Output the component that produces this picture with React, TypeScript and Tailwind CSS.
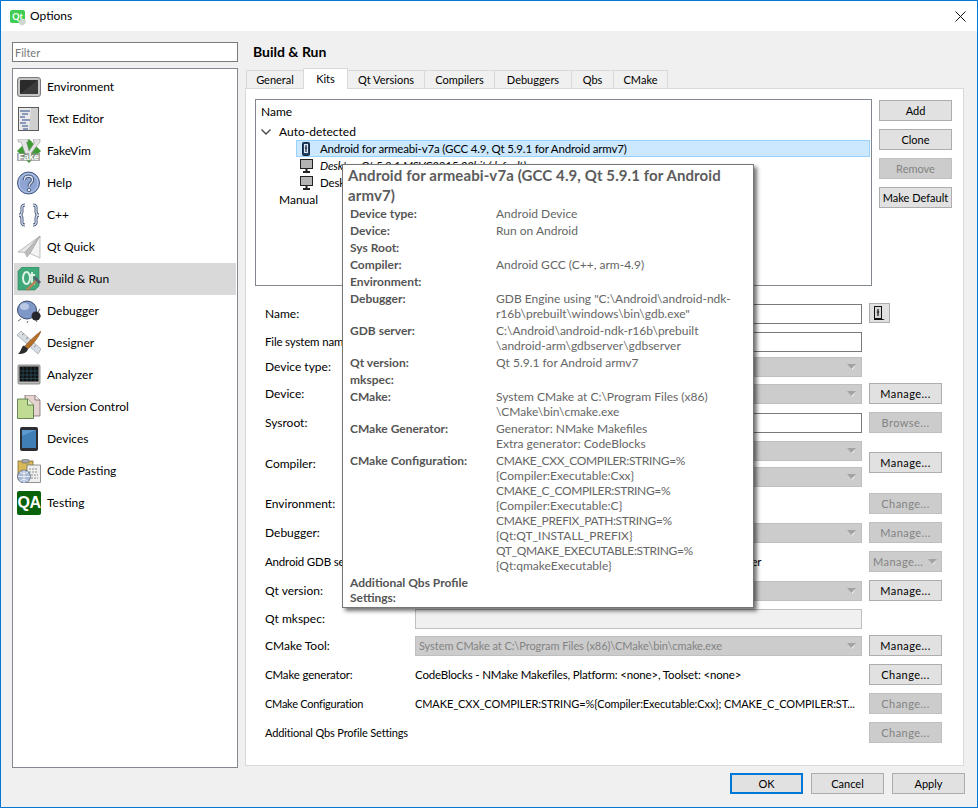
import React from "react";

const tight = "text-[11.5px] tracking-[-0.17px]";
const tighter = "text-[11px] tracking-[-0.15px]";

const sideItems = [
  { name: "Environment", icon: <EnvIcon /> },
  { name: "Text Editor", icon: <EditorIcon /> },
  { name: "FakeVim", icon: <VimIcon /> },
  { name: "Help", icon: <HelpIcon /> },
  { name: "C++", icon: <BracesIcon /> },
  { name: "Qt Quick", icon: <PlaneIcon /> },
  { name: "Build & Run", icon: <BuildIcon />, active: true },
  { name: "Debugger", icon: <BugIcon /> },
  { name: "Designer", icon: <DesignerIcon /> },
  { name: "Analyzer", icon: <AnalyzerIcon /> },
  { name: "Version Control", icon: <VersionIcon /> },
  { name: "Devices", icon: <DeviceIcon /> },
  { name: "Code Pasting", icon: <PasteIcon /> },
  { name: "Testing", icon: <QaIcon /> },
];

const tabs = [
  { name: "General", width: "w-[58px]" },
  { name: "Kits", width: "w-[45px]", active: true },
  { name: "Qt Versions", width: "w-[78px]" },
  { name: "Compilers", width: "w-[71px]" },
  { name: "Debuggers", width: "w-[78px]" },
  { name: "Qbs", width: "w-[43px]" },
  { name: "CMake", width: "w-[55px]" },
];

const tipRows = [
  ["Device type:", ["Android Device"]],
  ["Device:", ["Run on Android"]],
  ["Sys Root:", []],
  ["Compiler:", ["Android GCC (C++, arm-4.9)"]],
  ["Environment:", []],
  ["Debugger:", ['GDB Engine using "C:\\Android\\android-ndk-', "r16b\\prebuilt\\windows\\bin\\gdb.exe\""]],
  ["GDB server:", ["C:\\Android\\android-ndk-r16b\\prebuilt", "\\android-arm\\gdbserver\\gdbserver"]],
  ["Qt version:", ["Qt 5.9.1 for Android armv7"]],
  ["mkspec:", []],
  ["CMake:", ["System CMake at C:\\Program Files (x86)", "\\CMake\\bin\\cmake.exe"]],
  ["CMake Generator:", ["Generator: NMake Makefiles", "Extra generator: CodeBlocks"]],
  [
    "CMake Configuration:",
    [
      "CMAKE_CXX_COMPILER:STRING=%",
      "{Compiler:Executable:Cxx}",
      "CMAKE_C_COMPILER:STRING=%",
      "{Compiler:Executable:C}",
      "CMAKE_PREFIX_PATH:STRING=%",
      "{Qt:QT_INSTALL_PREFIX}",
      "QT_QMAKE_EXECUTABLE:STRING=%",
      "{Qt:qmakeExecutable}",
    ],
  ],
] as [string, string[]][];

function EnvIcon() {
  return (
    <svg width="24" height="24" viewBox="0 0 24 24">
      <rect x="0.5" y="2.5" width="23" height="19" rx="2.5" fill="#c4c4c4" stroke="#7c7c7c" />
      <rect x="3" y="5" width="18" height="14" rx="1" fill="#2a2a2a" />
      <path d="M3 19 21 5v14z" fill="#3b3b3b" />
    </svg>
  );
}

function EditorIcon() {
  return (
    <svg width="24" height="24" viewBox="0 0 24 24">
      <rect x="1.5" y="0.5" width="20" height="23" fill="#e8e8e8" stroke="#5a5a5a" />
      <path d="M14 1h7v22h-9z" fill="#cfcfcf" />
      <path d="M3 4h10M5 7h6M3 10h5M5 13h8M3 16h6M5 19h6M6 22h5" stroke="#2b4a8f" strokeWidth="1" />
    </svg>
  );
}

function VimIcon() {
  return (
    <svg width="24" height="24" viewBox="0 0 24 24">
      <path d="M12 0 24 12 12 24 0 12z" fill="#3f9c35" />
      <path d="M1 0h10v3H9.5L12 12l6-9h-1.5V0H23v3l-11 14H9L4 3H1z" fill="#e4e4e4" stroke="#8a8a8a" strokeWidth="0.5" />
      <rect x="0" y="14" width="23" height="8" fill="#8f8f8f" opacity="0.75" />
      <text x="11.5" y="21" textAnchor="middle" fontSize="9" fontWeight="700" fill="#fff" fontFamily="Liberation Sans, sans-serif">
        Fake
      </text>
    </svg>
  );
}

function HelpIcon() {
  return (
    <svg width="24" height="24" viewBox="0 0 24 24">
      <circle cx="11.5" cy="12" r="11" fill="#8ea5d3" stroke="#44557f" />
      <circle cx="11.5" cy="12" r="9.5" fill="none" stroke="#b8c7e6" />
      <path d="M7.5 9c0-5 8-5 8 0 0 3-3.500 3-3.500 6.500" fill="none" stroke="#33415f" strokeWidth="3" />
      <path d="M7.500 9c0-5 8-5 8 0 0 3-3.500 3-3.500 6.500" fill="none" stroke="#dfe6f5" strokeWidth="1.400" />
      <circle cx="12" cy="19" r="1.700" fill="#dfe6f5" stroke="#33415f" strokeWidth="0.700" />
    </svg>
  );
}

function BracesIcon() {
  const d = "M8 2C4 2 5 5 5 8c0 3-1 4-3 4 2 0 3 1 3 4 0 3-1 6 3 6M16 2c4 0 3 3 3 6 0 3 1 4 3 4-2 0-3 1-3 4 0 3 1 6-3 6";
  return (
    <svg width="24" height="24" viewBox="0 0 24 24">
      <path d={d} fill="none" stroke="#3d4f73" strokeWidth="3" />
      <path d={d} fill="none" stroke="#d9e1ee" strokeWidth="1.300" />
    </svg>
  );
}

function PlaneIcon() {
  return (
    <svg width="24" height="24" viewBox="0 0 24 24">
      <path d="M23 1 1 17l7 .5z" fill="#e6e6e6" stroke="#9a9a9a" strokeWidth="0.600" />
      <path d="M23 1 8 17.500 10 22l3-3.500z" fill="#bdbdbd" stroke="#9a9a9a" strokeWidth="0.600" />
      <path d="M23 1 13 18.500l10 4.500z" fill="#f3f3f3" stroke="#9a9a9a" strokeWidth="0.600" />
    </svg>
  );
}

function BuildIcon() {
  return (
    <svg width="24" height="24" viewBox="0 0 24 24">
      <path d="M5 0h17v19l-4 4H1V4z" fill="#41a879" stroke="#2f7d5a" strokeWidth="0.600" />
      <ellipse cx="9.500" cy="11" rx="3.500" ry="6" fill="none" stroke="#dff3e8" strokeWidth="2" />
      <path d="M15 5v10c0 1 1 2 3 2M13 8h5" fill="none" stroke="#dff3e8" strokeWidth="1.800" />
      <path d="M10 23 20 13" stroke="#b5835a" strokeWidth="2.500" />
      <path d="m17 10 6 6" stroke="#56606e" strokeWidth="3" />
    </svg>
  );
}

function BugIcon() {
  return (
    <svg width="24" height="24" viewBox="0 0 24 24">
      <path d="M4 20 1 22M11 22l-1 2M18 20l2 3M1 13l2 1" stroke="#444" strokeWidth="0.800" />
      <ellipse cx="10" cy="11" rx="9.500" ry="9" fill="#7f97c6" stroke="#39486b" />
      <ellipse cx="7.500" cy="7.500" rx="4.500" ry="3.500" fill="#b7c7e4" />
      <ellipse cx="19" cy="17" rx="4.500" ry="4.500" fill="#25262b" />
      <path d="M21 13l2-3M23 17h1" stroke="#333" strokeWidth="0.800" />
    </svg>
  );
}

function DesignerIcon() {
  return (
    <svg width="24" height="24" viewBox="0 0 24 24">
      <path d="M4 0 24 18l-3 5L0 4z" fill="#d8dde3" stroke="#8b939d" strokeWidth="0.600" />
      <path d="m5 4 2-1.500M9 8l2-1.500M13 12l2-1.500M17 16l2-1.500" stroke="#777" strokeWidth="0.800" />
      <path d="M24 0C20 3 13 9 8 15l3 3C16 13 22 6 24 0z" fill="#b5702a" stroke="#74451b" strokeWidth="0.500" />
      <path d="M7 14.500c-3 1-2 5-6 8.500 5 0 9-1 10-5z" fill="#2b2b2b" />
    </svg>
  );
}

function AnalyzerIcon() {
  return (
    <svg width="24" height="24" viewBox="0 0 24 24">
      <rect x="1" y="2" width="22" height="19" rx="1" fill="#b9b9b9" stroke="#777" strokeWidth="0.800" />
      <rect x="2.500" y="3.500" width="19" height="15" fill="#111" />
      <path d="M6 4v14M10 4v14M14 4v14M18 4v14M3 8h18M3 12h18M3 15.500h18" stroke="#2c5562" strokeWidth="0.700" />
    </svg>
  );
}

function VersionIcon() {
  return (
    <svg width="24" height="24" viewBox="0 0 24 24">
      <path d="M8 0h10l5 5v16H8z" fill="#e4d3d0" stroke="#6b5a5a" strokeWidth="0.700" />
      <path d="M18 0v5h5" fill="#f4ecea" stroke="#6b5a5a" strokeWidth="0.700" />
      <path d="M0.500 4h10l6 6v13.500H.5z" fill="#bfdc92" stroke="#4d6b3a" strokeWidth="0.800" />
      <path d="M10.500 4v6h6" fill="#e3f0cd" stroke="#4d6b3a" strokeWidth="0.800" />
    </svg>
  );
}

function DeviceIcon() {
  return (
    <svg width="24" height="24" viewBox="0 0 24 24">
      <rect x="3" y="0" width="18" height="24" rx="2" fill="#2b2d30" />
      <rect x="5" y="3" width="14" height="18" fill="#5b9ad0" />
      <path d="M5 21V9l14-6v18z" fill="#3f7fb5" />
    </svg>
  );
}

function PasteIcon() {
  return (
    <svg width="24" height="24" viewBox="0 0 24 24">
      <rect x="1" y="2" width="15" height="18" fill="#d9b85a" stroke="#75602a" strokeWidth="0.700" />
      <rect x="5" y="0.500" width="7" height="3.500" rx="1" fill="#a8a8a8" stroke="#555" strokeWidth="0.500" />
      <rect x="10" y="6" width="13.500" height="17.500" fill="#efefef" stroke="#666" strokeWidth="0.700" />
      <path d="M12 10h9M12 13h9M14 16h7M14 19h7" stroke="#777" strokeWidth="0.800" strokeDasharray="2 1" />
      <circle cx="7" cy="17.500" r="6.500" fill="#aabbd8" stroke="#4d5a72" strokeWidth="0.700" />
      <path d="M1 17.500h12M7 11v13M3 13c3 2 5 2 8 0M3 22c3-2 5-2 8 0" fill="none" stroke="#fff" strokeWidth="0.700" />
    </svg>
  );
}

function QaIcon() {
  return (
    <div className="flex h-[24px] w-[24px] items-center justify-center rounded-[2px] bg-[#07620a] text-[16px] font-bold tracking-[-0.5px] text-white [font-family:'Liberation_Sans',sans-serif]">
      QA
    </div>
  );
}

function PhoneSmall() {
  return (
    <svg width="8" height="14" viewBox="0 0 8 14">
      <rect x="0.500" y="0.500" width="7" height="13" rx="1" fill="#1f3e63" stroke="#14263f" />
      <rect x="2" y="2" width="4" height="9" fill="#dfe8f2" />
      <path d="M4 3v7M2.800 6h2.400" stroke="#14263f" strokeWidth="1.200" />
    </svg>
  );
}

function MonitorSmall() {
  return (
    <svg width="13" height="14" viewBox="0 0 13 14">
      <rect x="0.500" y="0.500" width="12" height="9" fill="#b4b4b4" stroke="#222" />
      <path d="M6.500 10v2" stroke="#222" strokeWidth="2" />
      <path d="M3 13h7" stroke="#222" strokeWidth="2" />
    </svg>
  );
}

function Btn({ children, disabled }: { children: string; disabled?: boolean }) {
  const dots = children.endsWith("...") ? "tracking-[0.45px]" : "";
  return (
    <div
      className={
        disabled
          ? `flex h-[21px] w-[73px] shrink-0 items-center justify-center border border-[#bfbfbf] bg-[#cccccc] pt-px text-[11px] whitespace-nowrap text-[#838383] ${dots}`
          : `flex h-[21px] w-[73px] shrink-0 items-center justify-center border border-[#adadad] bg-[#e1e1e1] pt-px text-[11px] whitespace-nowrap ${dots}`
      }
    >
      {children}
    </div>
  );
}

function Arrow() {
  return (
    <svg width="9" height="6" viewBox="0 0 9 6" className="shrink-0">
      <path d="M0 0h9L4.500 5z" fill="#a3a3a3" />
      <path d="M4.500 5 8.500 1 5.500 5.500z" fill="#ffffff" />
    </svg>
  );
}

function Combo({ text }: { text?: string }) {
  return (
    <div className="flex h-[20px] w-full items-center justify-between border border-[#bfbfbf] bg-[#cccccc] pt-px pr-[5px] pl-[3px] text-[11px] tracking-[-0.07px] text-[#838383]">
      <span>{text}</span>
      <Arrow />
    </div>
  );
}

function Input() {
  return <div className="h-[20px] w-full border border-[#7a7a7a] bg-white" />;
}

function Row({
  label,
  labelClass = "",
  margin,
  children,
  action,
  tall,
}: {
  label: string;
  labelClass?: string;
  margin: string;
  children?: React.ReactNode;
  action?: React.ReactNode;
  tall?: boolean;
}) {
  return (
    <div className={`flex ${margin} ${tall ? "h-[46px]" : "h-[20px]"}`}>
      <div className={`flex w-[150px] shrink-0 items-center pt-px whitespace-nowrap ${labelClass}`}>{label}</div>
      <div className="flex w-[447px] shrink-0 items-center pt-px">{children}</div>
      <div className={tall ? "mt-[12px] ml-[7px]" : "ml-[7px]"}>{action}</div>
    </div>
  );
}

function Tooltip() {
  return (
    <div className="absolute top-[163px] left-[341px] h-[444px] w-[412px] border border-[#767676] bg-white pt-px pl-[5px] text-[#666666] shadow-[3px_3px_4px_rgba(0,0,0,0.55)]">
      <div className="pr-[20px] text-[15px] leading-[19.5px] font-bold tracking-[0.1px] text-[#5c5c5c]">
        Android for armeabi-v7a (GCC 4.9, Qt 5.9.1 for Android armv7)
      </div>
      <div className="ml-[2px] leading-[15px]">
        {tipRows.map(([label, lines]) => (
          <div key={label} className="flex py-px">
            <div className="w-[146px] shrink-0 font-bold text-[#555555]">{label}</div>
            <div className="whitespace-nowrap">
              {lines.map((line) => (
                <div key={line} className={line.endsWith("=%") ? "tracking-[-0.35px]" : ""}>
                  {line}
                </div>
              ))}
            </div>
          </div>
        ))}
        <div className="w-[130px] py-px font-bold text-[#555555]">Additional Qbs Profile Settings:</div>
      </div>
    </div>
  );
}

export default function App() {
  return (
    <div className="relative flex h-[808px] w-[978px] flex-col overflow-hidden border border-[#0078d7] bg-[#f0f0f0] text-[12px] leading-[16px] text-black [font-family:Lato,sans-serif]">
      <div className="flex h-[30px] shrink-0 items-center justify-between bg-white pr-[11px] pl-[9px]">
        <div className="flex items-center gap-[5px]">
          <div className="relative flex h-[13px] w-[15px] items-center justify-center rounded-[2px] bg-[#41cd52] text-[9px] leading-none font-bold text-white">
            Qt
            <div className="absolute right-[-1px] bottom-[-2px] h-[6px] w-[7px] rotate-[-40deg] rounded-full bg-[#cfd8cf]" />
          </div>
          <span>Options</span>
        </div>
        <svg width="11" height="11" viewBox="0 0 11 11">
          <path d="M0.500 0.500 10.500 10.500M10.500 0.500 0.500 10.500" stroke="#111" strokeWidth="1" />
        </svg>
      </div>

      <div className="flex flex-1 pl-[11px]">
        <div className="w-[226px] shrink-0 pt-[11px]">
          <div className="flex h-[20px] items-center border border-[#7a7a7a] bg-white pt-px pl-[2px] text-[11px] text-[#787878]">Filter</div>
          <div className="mt-[6px] h-[700px] border border-[#828790] bg-white pt-[2px] pl-px">
            {sideItems.map((item) => (
              <div
                key={item.name}
                className={
                  item.active
                    ? "flex h-[32px] w-[222px] items-center gap-[6px] bg-[#d9d9d9] pl-[3px]"
                    : "flex h-[32px] w-[222px] items-center gap-[6px] pl-[3px]"
                }
              >
                <div className="h-[24px] w-[24px] shrink-0">{item.icon}</div>
                <span>{item.name}</span>
              </div>
            ))}
          </div>
        </div>

        <div className="ml-[7px] w-[720px] shrink-0">
          <div className="flex h-[37px] items-center pt-[5px] pl-[8px] text-[14px] font-bold">Build &amp; Run</div>
          <div className="relative z-10 -mb-px flex h-[21px] items-end pl-[2px] text-[11px]">
            {tabs.map((tab) => (
              <div
                key={tab.name}
                className={
                  tab.active
                    ? `${tab.width} -ml-px flex h-[21px] items-center justify-center border border-b-0 border-[#d9d9d9] bg-white`
                    : `${tab.width} -ml-px flex h-[19px] items-center justify-center border border-[#d9d9d9] bg-[#f0f0f0]`
                }
              >
                {tab.name}
              </div>
            ))}
          </div>
          <div className="h-[678px] w-[719px] border border-[#d9d9d9] bg-white pt-[10px] pl-[9px]">
            <div className="flex gap-[7px]">
              <div className="h-[187px] w-[617px] border border-[#828790] bg-white pt-[4px] pl-[9px]">
                <div className="-ml-[4px] h-[17px]">Name</div>
                <div className="mt-[2px] flex h-[17px] items-center">
                  <svg width="10" height="6" viewBox="0 0 10 6" className="mr-[8px] -ml-[4px]">
                    <path d="M0.500 0.500 5 5l4.500-4.500" fill="none" stroke="#444" strokeWidth="1.300" />
                  </svg>
                  <span>Auto-detected</span>
                </div>
                <div className="mr-px ml-[31px] flex h-[17px] items-center border border-[#99d1ff] bg-[#cce8ff] pl-[5px]">
                  <PhoneSmall />
                  <span className={`ml-[10px] whitespace-nowrap ${tight}`}>Android for armeabi-v7a (GCC 4.9, Qt 5.9.1 for Android armv7)</span>
                </div>
                <div className="ml-[35px] flex h-[17px] items-center">
                  <MonitorSmall />
                  <span className={`ml-[7px] whitespace-nowrap italic ${tight}`}>Desktop Qt 5.9.1 MSVC2015 32bit (default)</span>
                </div>
                <div className="ml-[35px] flex h-[17px] items-center">
                  <MonitorSmall />
                  <span className={`ml-[7px] whitespace-nowrap ${tight}`}>Desktop Qt 5.9.1 MSVC2015 64bit</span>
                </div>
                <div className="flex h-[17px] items-center pl-[14px]">Manual</div>
              </div>
              <div className="flex w-[73px] flex-col gap-[8px] pt-px">
                <Btn>Add</Btn>
                <Btn>Clone</Btn>
                <Btn disabled>Remove</Btn>
                <Btn>Make Default</Btn>
              </div>
            </div>

            <div className="pl-[10px]">
              <Row
                label="Name:"
                margin="mt-[17px]"
                action={
                  <div className="flex h-[20px] w-[21px] items-center justify-center border border-[#adadad] bg-[#e1e1e1]">
                    <svg width="13" height="14" viewBox="0 0 13 14">
                      <rect x="1.500" y="0.500" width="7" height="12" fill="#d8d8d8" stroke="#111" />
                      <path d="M5 3v7M3.800 6h2.400" stroke="#111" strokeWidth="1.200" />
                      <path d="M1 13h11l-2 1H1z" fill="#111" />
                    </svg>
                  </div>
                }
              >
                <Input />
              </Row>
              <Row label="File system name:" labelClass={tight} margin="mt-[8px]">
                <Input />
              </Row>
              <Row label="Device type:" margin="mt-[5px]">
                <Combo />
              </Row>
              <Row label="Device:" margin="mt-[7px]" action={<Btn>Manage...</Btn>}>
                <Combo />
              </Row>
              <Row label="Sysroot:" margin="mt-[9px]" action={<Btn disabled>Browse...</Btn>}>
                <Input />
              </Row>
              <Row label="Compiler:" margin="mt-[8px]" tall action={<Btn>Manage...</Btn>}>
                <div className="flex w-full flex-col gap-[6px]">
                  <Combo />
                  <Combo />
                </div>
              </Row>
              <Row label="Environment:" margin="mt-[7px]" action={<Btn disabled>Change...</Btn>} />
              <Row label="Debugger:" margin="mt-[9px]" action={<Btn disabled>Manage...</Btn>}>
                <Combo />
              </Row>
              <Row
                label="Android GDB server:"
                labelClass={tight}
                margin="mt-[9px]"
                action={
                  <div className="flex h-[21px] w-[73px] items-center justify-between border border-[#bfbfbf] bg-[#cccccc] pt-px pr-[4px] pl-[3px] text-[11px] tracking-[0.45px] text-[#838383]">
                    <span>Manage...</span>
                    <Arrow />
                  </div>
                }
              >
                <div className={`pl-[105px] whitespace-nowrap ${tight}`}>C:\Android\android-ndk-r16b\prebuilt\gdbserver</div>
              </Row>
              <Row label="Qt version:" margin="mt-[9px]" action={<Btn>Manage...</Btn>}>
                <Combo />
              </Row>
              <Row label="Qt mkspec:" margin="mt-[8px]">
                <div className="h-[20px] w-full border border-[#bfbfbf] bg-[#f0f0f0]" />
              </Row>
              <Row label="CMake Tool:" margin="mt-[7px]" action={<Btn>Manage...</Btn>}>
                <Combo text="System CMake at C:\Program Files (x86)\CMake\bin\cmake.exe" />
              </Row>
              <Row label="CMake generator:" labelClass={tight} margin="mt-[9px]" action={<Btn>Change...</Btn>}>
                <div className={`whitespace-nowrap ${tight}`}>CodeBlocks - NMake Makefiles, Platform: &lt;none&gt;, Toolset: &lt;none&gt;</div>
              </Row>
              <Row label="CMake Configuration" labelClass="text-[11px] tracking-[-0.25px]" margin="mt-[9px]" action={<Btn disabled>Change...</Btn>}>
                <div className="whitespace-nowrap text-[11px] tracking-[-0.1px]">CMAKE_CXX_COMPILER:STRING=%{"{"}Compiler:Executable:Cxx{"}"}; CMAKE_C_COMPILER:ST...</div>
              </Row>
              <Row label="Additional Qbs Profile Settings" labelClass={tighter} margin="mt-[9px]" action={<Btn disabled>Change...</Btn>} />
            </div>
          </div>

          <div className="mt-[7px] flex justify-end gap-[8px]">
            <div className="flex h-[21px] w-[73px] items-center justify-center border-2 border-[#0078d7] bg-[#e1e1e1] pt-px text-[11px]">OK</div>
            <Btn>Cancel</Btn>
            <Btn>Apply</Btn>
          </div>
        </div>
      </div>

      <Tooltip />
    </div>
  );
}
